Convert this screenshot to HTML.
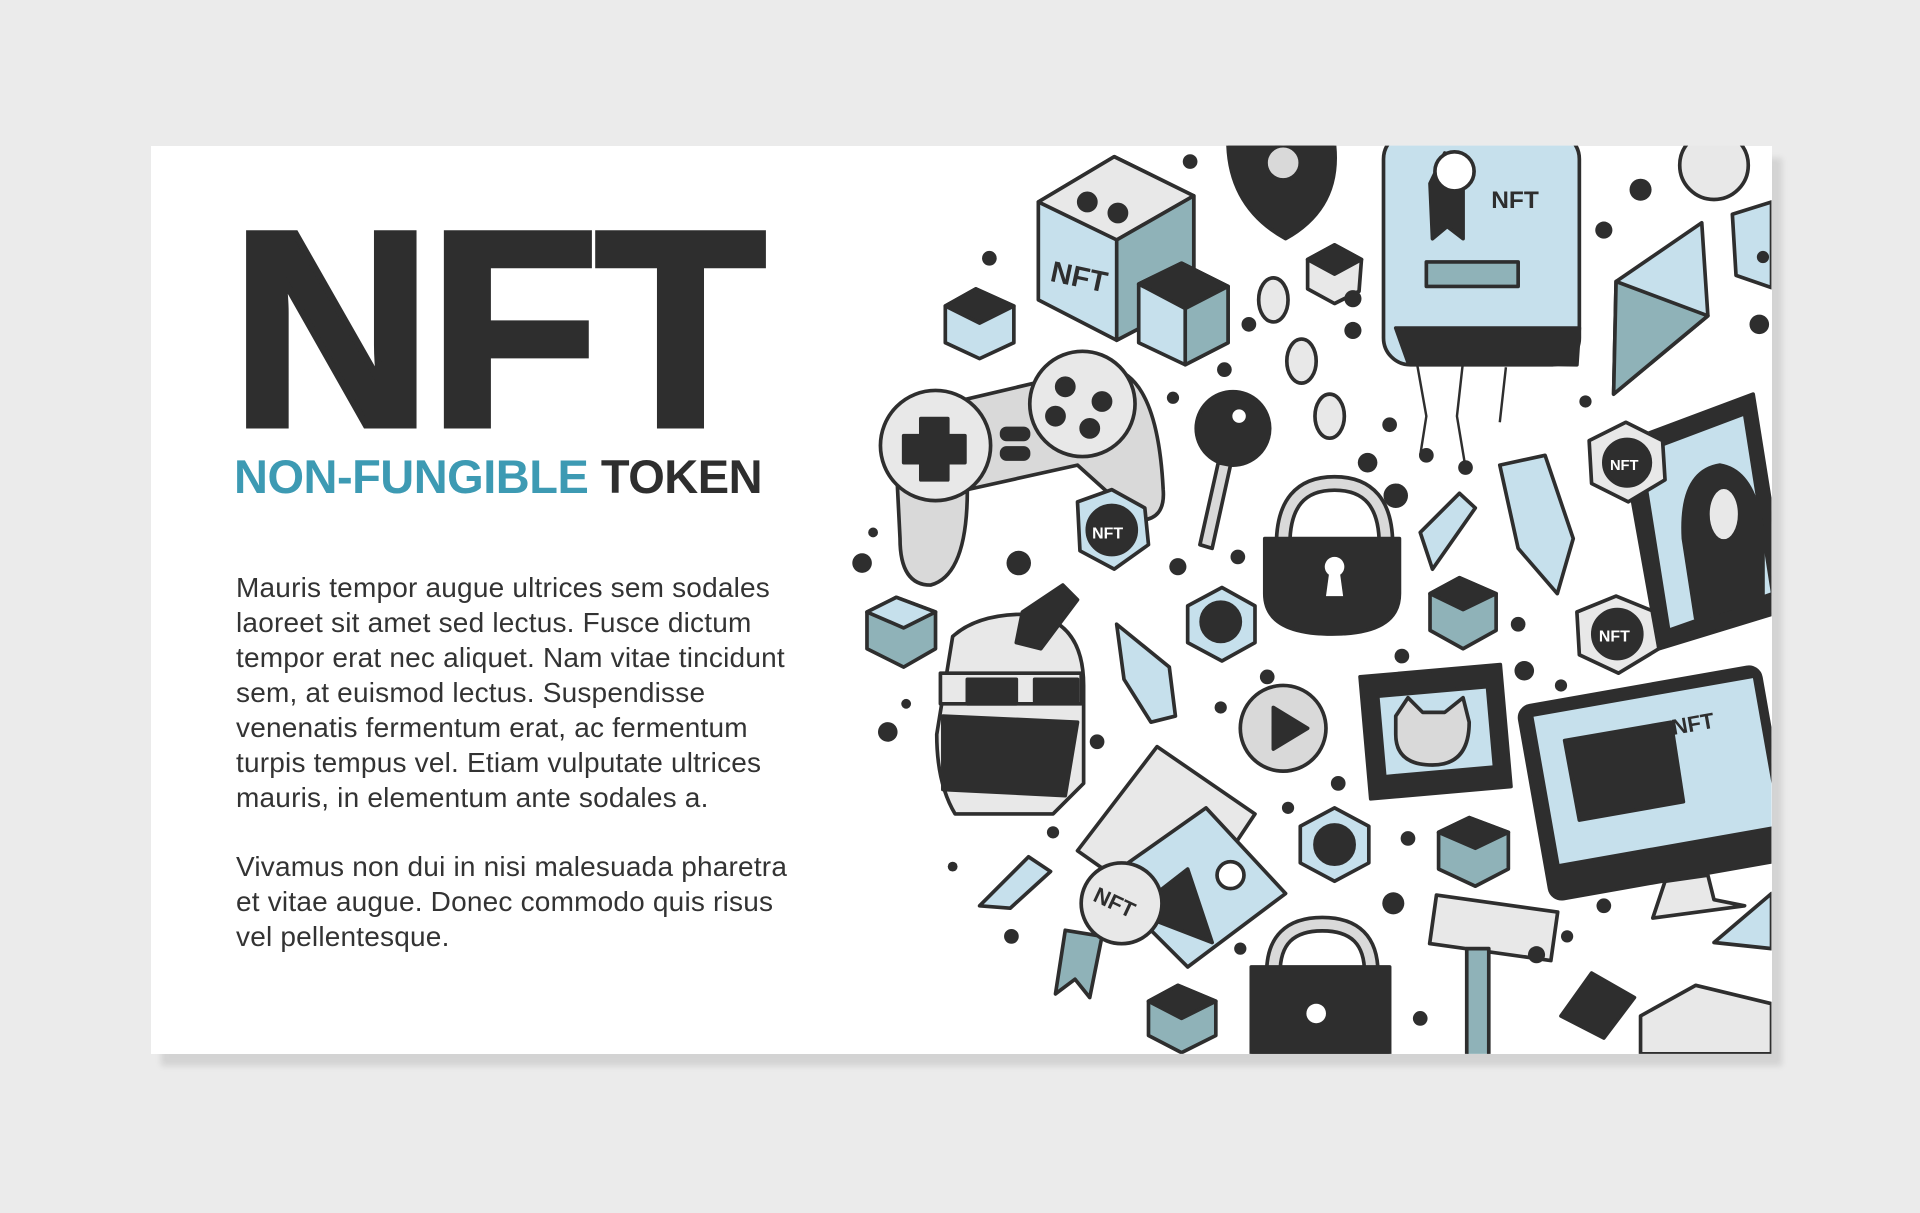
<!DOCTYPE html>
<html><head><meta charset="utf-8"><style>
html,body{margin:0;padding:0;width:1920px;height:1213px;background:#ebebeb;overflow:hidden}
.card{position:absolute;left:151px;top:146px;width:1621px;height:908px;background:#fff;box-shadow:10px 12px 6px rgba(0,0,0,0.10);overflow:hidden}
.t1{position:absolute;left:231px;top:190px;font:900 278px/1 "Liberation Sans",sans-serif;color:#2e2e2e;letter-spacing:-3px;-webkit-text-stroke:7px #2e2e2e}
.t2{position:absolute;left:234px;top:453px;font:bold 47px/1 "Liberation Sans",sans-serif;color:#2e2e2e;letter-spacing:-0.5px}
.t2 span{color:#3d9ab3}
.p{position:absolute;left:236px;font:28px/35px "Liberation Sans",sans-serif;color:#333;width:640px;letter-spacing:0.2px}
svg{position:absolute;left:0;top:0}
</style></head><body>
<div class="card"></div>
<div class="t1">NFT</div>
<div class="t2"><span>NON-FUNGIBLE</span> TOKEN</div>
<div class="p" style="top:570px">Mauris tempor augue ultrices sem sodales<br>laoreet sit amet sed lectus. Fusce dictum<br>tempor erat nec aliquet. Nam vitae tincidunt<br>sem, at euismod lectus. Suspendisse<br>venenatis fermentum erat, ac fermentum<br>turpis tempus vel. Etiam vulputate ultrices<br>mauris, in elementum ante sodales a.</div>
<div class="p" style="top:849px">Vivamus non dui in nisi malesuada pharetra<br>et vitae augue. Donec commodo quis risus<br>vel pellentesque.</div>
<svg width="1920" height="1213" viewBox="0 0 1568 991">
<defs><clipPath id="c"><rect x="123" y="119" width="1324" height="742"/></clipPath></defs>
<g clip-path="url(#c)" stroke="#2e2e2e" stroke-width="3" stroke-linejoin="round">
<polygon points="848,165 910,128 975,160 975,245 912,278 848,245" fill="#c6e0ec"/>
<polygon points="848,165 910,128 975,160 912,196" fill="#e8e8e8"/>
<polygon points="912,196 975,160 975,245 912,278" fill="#8fb2b8"/>
<text x="858" y="232" font-family="Liberation Sans" font-weight="bold" font-size="24" fill="#2e2e2e" stroke="none" transform="rotate(12 870 225)">NFT</text>
<circle cx="888" cy="165" r="7" fill="#2e2e2e"/><circle cx="913" cy="174" r="7" fill="#2e2e2e"/>
<polygon points="930,232 965,215 1003,234 1003,280 968,298 930,280" fill="#c6e0ec"/>
<polygon points="930,232 965,215 1003,234 968,252" fill="#2e2e2e"/>
<polygon points="968,252 1003,234 1003,280 968,298" fill="#8fb2b8"/>
<path d="M1003,119 L1090,119 Q1095,170 1050,195 Q1005,170 1003,119Z" fill="#2e2e2e"/>
<circle cx="1048" cy="133" r="14" fill="#d9d9d9"/>
<polygon points="772,250 797,236 828,250 828,280 800,293 772,280" fill="#c6e0ec"/>
<polygon points="772,250 797,236 828,250 800,264" fill="#2e2e2e"/>
<polygon points="1068,212 1090,200 1112,212 1110,238 1090,248 1068,236" fill="#e8e8e8"/>
<polygon points="1068,212 1090,200 1112,212 1090,224" fill="#2e2e2e"/>
<polygon points="708,500 732,488 764,500 764,530 738,545 708,530" fill="#8fb2b8"/>
<polygon points="708,500 732,488 764,500 738,513" fill="#c6e0ec"/>
<polygon points="1168,485 1192,472 1222,485 1222,515 1195,530 1168,515" fill="#8fb2b8"/>
<polygon points="1168,485 1192,472 1222,485 1195,498" fill="#2e2e2e"/>
<polygon points="1175,680 1200,668 1232,680 1232,710 1205,724 1175,710" fill="#8fb2b8"/>
<polygon points="1175,680 1200,668 1232,680 1205,693" fill="#2e2e2e"/>
<polygon points="938,818 962,805 993,818 993,846 965,860 938,846" fill="#8fb2b8"/>
<polygon points="938,818 962,805 993,818 965,832" fill="#2e2e2e"/>
<rect x="1130" y="108" width="160" height="190" rx="22" fill="#c6e0ec"/>
<path d="M1140,268 L1290,268 L1288,298 L1150,296Z" fill="#2e2e2e"/>
<rect x="1165" y="214" width="75" height="20" fill="#8fb2b8"/>
<path d="M1168,150 L1180,125 L1195,150 L1195,195 L1182,185 L1170,195Z" fill="#2e2e2e"/>
<circle cx="1188" cy="140" r="16" fill="#fff"/>
<text x="1218" y="170" font-family="Liberation Sans" font-weight="bold" font-size="20" fill="#2e2e2e" stroke="none">NFT</text>
<ellipse cx="1040" cy="245" rx="12" ry="18" fill="#e8e8e8"/><ellipse cx="1063" cy="295" rx="12" ry="18" fill="#e8e8e8"/><ellipse cx="1086" cy="340" rx="12" ry="18" fill="#e8e8e8"/>
<polygon points="1320,230 1390,182 1395,258 1318,322" fill="#c6e0ec"/>
<polygon points="1320,230 1395,258 1318,322" fill="#8fb2b8"/>
<path d="M730,340 L900,300 Q945,300 950,400 Q952,425 930,425 L880,380 L790,400 Q790,470 760,478 Q735,478 735,440Z" fill="#d9d9d9"/>
<circle cx="764" cy="364" r="45" fill="#e8e8e8"/>
<circle cx="884" cy="330" r="43" fill="#e8e8e8"/>
<path d="M752,342h22v14h14v22h-14v14h-22v-14h-14v-22h14Z" fill="#2e2e2e"/>
<circle cx="870" cy="316" r="7" fill="#2e2e2e"/><circle cx="900" cy="328" r="7" fill="#2e2e2e"/><circle cx="862" cy="340" r="7" fill="#2e2e2e"/><circle cx="890" cy="350" r="7" fill="#2e2e2e"/>
<rect x="818" y="350" width="22" height="9" rx="4" fill="#2e2e2e"/><rect x="818" y="366" width="22" height="9" rx="4" fill="#2e2e2e"/>
<circle cx="1007" cy="350" r="30" fill="#2e2e2e"/><circle cx="1012" cy="340" r="7" fill="#fff"/>
<path d="M995,378 L1005,380 L990,448 L980,445Z" fill="#d9d9d9"/>
<path d="M1048,445 Q1048,395 1090,395 Q1132,395 1132,445" fill="none" stroke-width="14"/>
<path d="M1048,445 Q1048,395 1090,395 Q1132,395 1132,445" fill="none" stroke="#d9d9d9" stroke-width="8"/>
<path d="M1033,440 L1143,440 L1143,485 Q1143,518 1088,518 Q1033,518 1033,485Z" fill="#2e2e2e"/>
<circle cx="1090" cy="463" r="8" fill="#fff" stroke="none"/><path d="M1086,465h8l3,22h-14Z" fill="#fff" stroke="none"/>
<path d="M1040,795 Q1040,755 1080,755 Q1120,755 1120,795" fill="none" stroke-width="14"/>
<path d="M1040,795 Q1040,755 1080,755 Q1120,755 1120,795" fill="none" stroke="#d9d9d9" stroke-width="8"/>
<path d="M1022,790 L1135,790 L1135,861 L1022,861Z" fill="#2e2e2e"/>
<circle cx="1075" cy="828" r="8" fill="#fff" stroke="none"/>
<polygon points="880,410 908,400 935,415 938,445 910,465 882,450" fill="#c6e0ec"/><circle cx="908" cy="433" r="20" fill="#2e2e2e"/>
<text x="892" y="440" font-family="Liberation Sans" font-weight="bold" font-size="13" fill="#fff" stroke="none">NFT</text>
<polygon points="1288,500 1320,487 1352,500 1355,530 1322,550 1290,535" fill="#e8e8e8"/><circle cx="1321" cy="518" r="20" fill="#2e2e2e"/>
<text x="1306" y="524" font-family="Liberation Sans" font-weight="bold" font-size="13" fill="#fff" stroke="none">NFT</text>
<polygon points="970,495 998,480 1025,495 1025,525 998,540 970,525" fill="#c6e0ec"/><circle cx="997" cy="508" r="16" fill="#2e2e2e"/>
<polygon points="1062,675 1090,660 1118,675 1118,705 1090,720 1062,705" fill="#c6e0ec"/><circle cx="1090" cy="690" r="16" fill="#2e2e2e"/>
<polygon points="1160,435 1192,403 1205,415 1170,465" fill="#c6e0ec"/>
<polygon points="1225,380 1262,372 1285,440 1272,485 1240,448" fill="#c6e0ec"/>
<polygon points="912,510 955,545 960,585 940,590 918,555" fill="#c6e0ec"/>
<polygon points="800,740 840,700 858,712 825,742" fill="#c6e0ec"/>
<!-- mona lisa frame -->
<polygon points="1325,362 1432,322 1460,498 1355,530" fill="#2e2e2e"/>
<polygon points="1340,370 1425,338 1448,485 1363,515" fill="#c6e0ec"/>
<path d="M1375,440 Q1372,385 1405,380 Q1435,385 1440,440 L1440,490 L1385,505Z" fill="#2e2e2e"/>
<ellipse cx="1408" cy="420" rx="13" ry="22" fill="#e8e8e8"/>
<polygon points="1298,360 1328,345 1358,360 1360,392 1330,410 1300,395" fill="#e8e8e8"/><circle cx="1329" cy="378" r="19" fill="#2e2e2e"/>
<text x="1315" y="384" font-family="Liberation Sans" font-weight="bold" font-size="12" fill="#fff" stroke="none">NFT</text>
<path d="M778,520 Q800,500 845,502 Q885,510 885,560 L885,640 L860,665 L780,665 Q765,640 765,600Z" fill="#e8e8e8"/>
<path d="M835,500 L868,478 L880,490 L850,530 L830,525Z" fill="#2e2e2e"/>
<rect x="768" y="550" width="115" height="25" fill="#e8e8e8"/>
<path d="M790,555h40v20h-40Z M845,555h35v18h-35Z" fill="#2e2e2e"/>
<path d="M770,585 L880,590 L870,650 L770,645Z" fill="#2e2e2e"/>
<circle cx="1048" cy="595" r="35" fill="#d9d9d9"/><polygon points="1040,578 1068,595 1040,612" fill="#2e2e2e"/>
<rect x="1115" y="548" width="115" height="100" fill="#2e2e2e" transform="rotate(-5 1170 598)"/>
<rect x="1128" y="565" width="90" height="66" fill="#c6e0ec" transform="rotate(-5 1170 598)"/>
<path d="M1140,585 L1150,570 L1162,582 L1180,582 L1195,570 L1200,590 Q1200,625 1170,625 Q1140,625 1140,600Z" fill="#d9d9d9"/>
<rect x="1252" y="560" width="200" height="160" rx="10" fill="#2e2e2e" transform="rotate(-10 1350 640)"/>
<rect x="1262" y="568" width="185" height="125" fill="#c6e0ec" transform="rotate(-10 1350 640)"/>
<path d="M1278,605 L1365,590 L1375,655 L1290,670Z" fill="#2e2e2e"/>
<path d="M1360,720 L1395,715 L1400,735 L1425,740 L1350,750Z" fill="#e8e8e8"/>
<text x="1365" y="598" font-family="Liberation Sans" font-weight="bold" font-size="18" fill="#2e2e2e" stroke="none" transform="rotate(-10 1380 590)">NFT</text>
<polygon points="880,695 945,610 1025,665 965,755" fill="#e8e8e8"/>
<polygon points="900,720 985,660 1050,730 970,790" fill="#c6e0ec"/>
<polygon points="925,745 970,710 990,770" fill="#2e2e2e"/>
<circle cx="1005" cy="715" r="11" fill="#fff"/>
<polygon points="870,760 900,765 890,815 878,800 862,812" fill="#8fb2b8"/>
<circle cx="916" cy="738" r="33" fill="#e8e8e8"/>
<text x="893" y="746" font-family="Liberation Sans" font-weight="bold" font-size="18" fill="#2e2e2e" stroke="none" transform="rotate(25 916 738)">NFT</text>
<rect x="1170" y="738" width="100" height="40" fill="#e8e8e8" transform="rotate(8 1220 758)"/>
<rect x="1198" y="775" width="18" height="90" fill="#8fb2b8"/>
<path d="M1275,830 L1300,795 L1335,815 L1310,848Z" fill="#2e2e2e"/>
<polygon points="1340,830 1385,805 1447,820 1447,861 1340,861" fill="#e8e8e8"/>
<polygon points="1400,770 1447,730 1447,775" fill="#c6e0ec"/>
<polygon points="1415,175 1447,165 1447,235 1418,225" fill="#c6e0ec"/>
<circle cx="1400" cy="135" r="28" fill="#e8e8e8"/>
<path d="M1157,295 L1165,340 L1160,372 M1195,295 L1190,340 L1197,382 M1230,300 L1225,345" fill="none" stroke-width="2"/>
</g>
<g fill="#2e2e2e" clip-path="url(#c)">
<circle cx="972" cy="132" r="6"/><circle cx="808" cy="211" r="6"/><circle cx="1105" cy="244" r="7"/><circle cx="1340" cy="155" r="9"/><circle cx="1310" cy="188" r="7"/>
<circle cx="1105" cy="270" r="7"/><circle cx="1135" cy="347" r="6"/><circle cx="1117" cy="378" r="8"/><circle cx="1140" cy="405" r="10"/><circle cx="1165" cy="372" r="6"/><circle cx="1197" cy="382" r="6"/>
<circle cx="1020" cy="265" r="6"/><circle cx="1000" cy="302" r="6"/><circle cx="958" cy="325" r="5"/><circle cx="1295" cy="328" r="5"/><circle cx="1437" cy="265" r="8"/>
<circle cx="704" cy="460" r="8"/><circle cx="832" cy="460" r="10"/><circle cx="713" cy="435" r="4"/><circle cx="962" cy="463" r="7"/><circle cx="1011" cy="455" r="6"/><circle cx="1035" cy="553" r="6"/>
<circle cx="1240" cy="510" r="6"/><circle cx="1245" cy="548" r="8"/><circle cx="1145" cy="536" r="6"/><circle cx="1275" cy="560" r="5"/>
<circle cx="725" cy="598" r="8"/><circle cx="740" cy="575" r="4"/><circle cx="896" cy="606" r="6"/><circle cx="997" cy="578" r="5"/><circle cx="1093" cy="640" r="6"/><circle cx="1052" cy="660" r="5"/>
<circle cx="778" cy="708" r="4"/><circle cx="826" cy="765" r="6"/><circle cx="860" cy="680" r="5"/><circle cx="1138" cy="738" r="9"/><circle cx="1150" cy="685" r="6"/><circle cx="1160" cy="832" r="6"/><circle cx="1013" cy="775" r="5"/>
<circle cx="1255" cy="780" r="7"/><circle cx="1280" cy="765" r="5"/><circle cx="1310" cy="740" r="6"/><circle cx="1440" cy="210" r="5"/>
</g>
</svg>
</body></html>
